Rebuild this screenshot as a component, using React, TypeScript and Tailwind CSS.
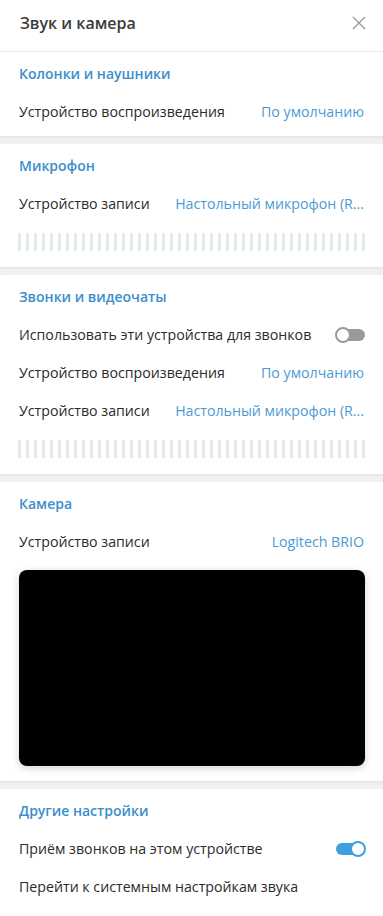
import React from "react";

const font = { fontFamily: '"Open Sans", "Noto Sans", sans-serif' };

function Sep() {
  return <div className="h-[8px] bg-[#f1f1f1] border-t border-[#e6e6e6] shadow-[inset_0_1px_2px_rgba(0,0,0,0.04)]" />;
}

function Title({ children }: { children: React.ReactNode }) {
  return (
    <div className="pt-[12px] pb-[9px] px-[19px] h-[41px] flex items-center text-[14px] font-semibold text-[#3a8ecd] leading-[20px]">
      {children}
    </div>
  );
}

function Row({ label, value, right }: { label: string; value?: string; right?: React.ReactNode }) {
  return (
    <div className="h-[38px] px-[19px] flex items-center justify-between text-[14.2px] leading-[20px]">
      <span className="text-[#2b2b2b] whitespace-nowrap">{label}</span>
      {value && <span className="text-[#4a9bd5] whitespace-nowrap ml-[20px] overflow-hidden text-ellipsis">{value}</span>}
      {right}
    </div>
  );
}

function Bars({ color }: { color: string }) {
  const n = 44;
  return (
    <div className="px-[18px] mt-[10px] mb-[16px] h-[18px] flex justify-between">
      {Array.from({ length: n }).map((_, i) => (
        <div key={i} className="w-[3px] h-[18px]" style={{ background: color }} />
      ))}
    </div>
  );
}

function ToggleOff() {
  return (
    <div className="relative w-[30px] h-[14px] mr-[-1px]">
      <div className="absolute left-[2px] right-0 top-[1px] h-[12px] rounded-full bg-[#9a9a9a]" />
      <div className="absolute left-0 top-[-1px] w-[16px] h-[16px] rounded-full bg-white border-[2px] border-[#9a9a9a]" />
    </div>
  );
}

function ToggleOn() {
  return (
    <div className="relative w-[30px] h-[16px] mr-[-2px]">
      <div className="absolute left-0 right-[2px] top-[2px] h-[12px] rounded-full bg-[#3d9ee0]" />
      <div className="absolute right-0 top-0 w-[16px] h-[16px] rounded-full bg-white border-[2px] border-[#3d9ee0]" />
    </div>
  );
}

export default function App() {
  return (
    <div className="w-[383px] h-[916px] bg-white overflow-hidden" style={font}>
      <div className="h-[52px] border-b border-[#e8e8e8] flex items-center justify-between px-[20px]">
        <span className="text-[16px] font-semibold text-[#3a3a3a] mt-[-6px]">Звук и камера</span>
        <svg width="14" height="14" viewBox="0 0 14 14" className="mt-[-6px] mr-[-3px]">
          <path d="M1 1 L13 13 M13 1 L1 13" stroke="#9a9a9a" strokeWidth="1.4" />
        </svg>
      </div>

      <div className="pb-[5px]">
        <Title>Колонки и наушники</Title>
        <Row label="Устройство воспроизведения" value="По умолчанию" />
      </div>
      <Sep />

      <div>
        <Title>Микрофон</Title>
        <Row label="Устройство записи" value="Настольный микрофон (R..." />
        <Bars color="#e1ebee" />
      </div>
      <Sep />

      <div>
        <Title>Звонки и видеочаты</Title>
        <Row label="Использовать эти устройства для звонков" right={<ToggleOff />} />
        <Row label="Устройство воспроизведения" value="По умолчанию" />
        <Row label="Устройство записи" value="Настольный микрофон (R..." />
        <Bars color="#e9e9e9" />
      </div>
      <Sep />

      <div>
        <Title>Камера</Title>
        <Row label="Устройство записи" value="Logitech BRIO" />
        <div className="px-[19px] mt-[9px] mb-[15px]">
          <div className="h-[196px] w-[346px] bg-black rounded-[8px] shadow-[0_2px_8px_rgba(0,0,0,0.18)]" />
        </div>
      </div>
      <Sep />

      <div>
        <Title>Другие настройки</Title>
        <Row label="Приём звонков на этом устройстве" right={<ToggleOn />} />
        <Row label="Перейти к системным настройкам звука" />
      </div>
    </div>
  );
}
